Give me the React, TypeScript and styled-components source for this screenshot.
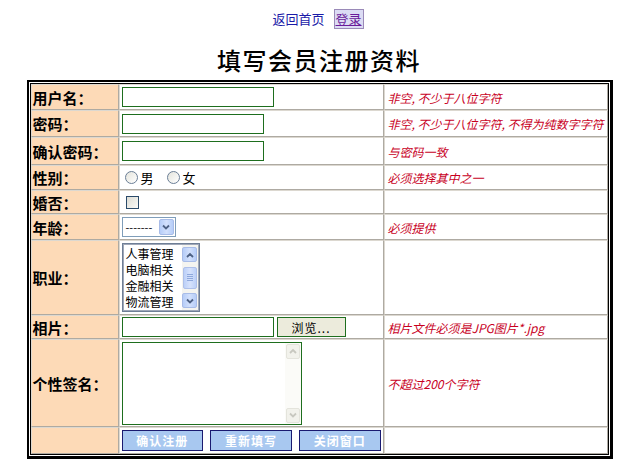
import styled, { createGlobalStyle } from 'styled-components'

const GlobalStyle = createGlobalStyle`
  html, body { margin: 0; padding: 0; background: #fff; }
  body { font-family: "Noto Sans CJK SC", "Liberation Sans", sans-serif; color: #000; }
`

const Page = styled.div`
  width: 638px;
  display: flex;
  flex-direction: column;
  align-items: center;
`

const TopLinks = styled.div`
  margin-top: 9px;
  height: 20px;
  display: flex;
  align-items: center;
  gap: 9px;
  font-size: 13px;
  line-height: 18px;
  margin-right: 4px;
`

const NavLink = styled.a<{ $active?: boolean }>`
  color: ${p => (p.$active ? '#6a1a9a' : '#1a1aa8')};
  text-decoration: ${p => (p.$active ? 'underline' : 'none')};
  background: ${p => (p.$active ? '#dcdcf4' : 'transparent')};
  outline: ${p => (p.$active ? '1px solid #9a8ab8' : 'none')};
  padding: 0 1px;
  cursor: pointer;
`

const Title = styled.h1`
  margin: 16px 0 0;
  height: 32px;
  font-size: 24px;
  line-height: 30px;
  font-weight: 500;
  letter-spacing: 1.5px;
`

const Frame = styled.div`
  margin-top: 3px;
  border: 2px solid #000;
  border-bottom-width: 3px;
  border-right-width: 3px;
  padding: 1px;
  background: #fff;
  margin-left: 1px;
`

const Table = styled.table`
  border: 1px solid #000;
  border-collapse: separate;
  border-spacing: 0;
  table-layout: fixed;
  width: 579px;
`

const Row = styled.tr<{ $h: number }>`
  height: ${p => p.$h}px;
`

const Cell = styled.td`
  border: 1px solid;
  border-color: #dcd8d0 #aeaaa2 #aeaaa2 #dcd8d0;
  padding: 0 2px;
  vertical-align: middle;
  font-size: 13px;
`

const LabelCell = styled(Cell)`
  width: 84px;
  background: #fddab7;
  font-size: 15px;
  font-weight: 700;
  padding: 0 0 0 1px;
  white-space: nowrap;
`

const HintCell = styled(Cell)`
  width: 218px;
  padding-left: 3px;
  color: #c8001e;
  font-size: 12px;
  font-style: italic;
  white-space: nowrap;
  overflow: hidden;
`

const TextInput = styled.input<{ $w: number }>`
  width: ${p => p.$w}px;
  height: 20px;
  box-sizing: border-box;
  border: 1px solid #1e6e1e;
  padding: 0 2px;
  display: block;
  outline: none;
`

const RadioGroup = styled.div`
  display: flex;
  align-items: center;
  padding-left: 3px;
  gap: 3px;
  font-size: 13px;
`

const Radio = styled.span`
  width: 11px;
  height: 11px;
  border-radius: 50%;
  border: 1px solid #6a7e96;
  background: linear-gradient(135deg, #e4e4dc, #fff);
  display: inline-block;
`

const RadioLabel = styled.span`
  margin-right: 10px;
`

const Check = styled.span`
  display: block;
  margin-left: 4px;
  width: 11px;
  height: 11px;
  border: 1px solid #2a4a6a;
  background: linear-gradient(135deg, #dcdcd4, #fafaf8);
`

const SelectBox = styled.div`
  width: 54px;
  height: 20px;
  box-sizing: border-box;
  border: 1px solid #7f9db9;
  display: flex;
  align-items: center;
  justify-content: space-between;
  font-size: 11px;
  padding-left: 3px;
  background: #fff;
`

const ArrowBtn = styled.span<{ $h?: number }>`
  width: 15px;
  height: ${p => p.$h ?? 16}px;
  margin: 1px;
  border-radius: 2px;
  background: linear-gradient(90deg, #b6cdf8, #d2e0fc, #b6cdf8);
  border: 1px solid #a8bce8;
  box-sizing: border-box;
  display: flex;
  align-items: center;
  justify-content: center;
`

const ListBox = styled.div`
  width: 78px;
  height: 69px;
  box-sizing: border-box;
  border: 2px solid #a0a8b8;
  outline: 1px solid #6e7e96;
  outline-offset: -1px;
  display: flex;
  background: #fff;
`

const ListItems = styled.div`
  flex: 1;
  padding: 1px 0 0 2px;
  font-size: 12px;
  line-height: 16px;
  overflow: hidden;
  white-space: nowrap;
`

const ScrollBar = styled.div<{ $pale?: boolean }>`
  width: 16px;
  display: flex;
  flex-direction: column;
  justify-content: space-between;
  align-items: center;
  padding: 1px 0;
  background: ${p => (p.$pale ? '#fbfbf8' : '#f4f4f0')};
`

const Thumb = styled.span`
  width: 14px;
  height: 22px;
  border-radius: 2px;
  background: linear-gradient(90deg, #bcd0f8, #d6e2fc, #bcd0f8);
  border: 1px solid #aec0ea;
  box-sizing: border-box;
  display: flex;
  flex-direction: column;
  align-items: center;
  justify-content: center;
  gap: 1px;
  & > i { display: block; width: 6px; height: 1px; background: #8ea8dc; }
`

const PaleArrow = styled.span`
  width: 14px;
  height: 15px;
  border-radius: 2px;
  border: 1px solid #e4e4dc;
  background: #f2f2ec;
  box-sizing: border-box;
  display: flex;
  align-items: center;
  justify-content: center;
`

const FileRow = styled.div`
  display: flex;
  gap: 3px;
  align-items: center;
`

const BrowseBtn = styled.button`
  width: 69px;
  height: 20px;
  border: 1px solid #1e6e1e;
  background: #ecebdc;
  font-family: inherit;
  font-size: 12px;
  letter-spacing: 1px;
  padding: 0;
  color: #000;
`

const TextArea = styled.div`
  width: 180px;
  height: 83px;
  box-sizing: border-box;
  border: 1px solid #1e6e1e;
  display: flex;
  justify-content: flex-end;
  background: #fff;
`

const BtnRow = styled.div`
  display: flex;
  gap: 7px;
`

const ActionBtn = styled.button`
  width: 82px;
  height: 21px;
  background: #a8c8f0;
  border: 1px solid #1a1a70;
  color: #fff;
  font-family: inherit;
  font-size: 12px;
  font-weight: 700;
  letter-spacing: 1px;
  padding: 0;
`

const Chevron = ({ up, color = '#4d6185' }: { up?: boolean; color?: string }) => (
  <svg width="8" height="6" viewBox="0 0 8 6">
    <path d={up ? 'M1 5 L4 2 L7 5' : 'M1 1.5 L4 4.5 L7 1.5'} fill="none" stroke={color} strokeWidth="1.8" />
  </svg>
)

const rows = [
  { label: '用户名：', h: 26, hint: '非空, 不少于八位字符', field: <TextInput $w={152} /> },
  { label: '密码：', h: 27, hint: '非空, 不少于八位字符, 不得为纯数字字符', field: <TextInput $w={142} type="password" /> },
  { label: '确认密码：', h: 28, hint: '与密码一致', field: <TextInput $w={142} type="password" /> }
]

export default function App () {
  return (
    <Page>
      <GlobalStyle />
      <TopLinks>
        <NavLink>返回首页</NavLink>
        <NavLink $active>登录</NavLink>
      </TopLinks>
      <Title>填写会员注册资料</Title>
      <Frame>
        <Table>
          <colgroup>
            <col style={{ width: 88 }} />
            <col style={{ width: 265 }} />
            <col style={{ width: 224 }} />
          </colgroup>
          <tbody>
            {rows.map(r => (
              <Row $h={r.h} key={r.label}>
                <LabelCell>{r.label}</LabelCell>
                <Cell>{r.field}</Cell>
                <HintCell>{r.hint}</HintCell>
              </Row>
            ))}
            <Row $h={25}>
              <LabelCell>性别：</LabelCell>
              <Cell>
                <RadioGroup>
                  <Radio /><RadioLabel>男</RadioLabel>
                  <Radio /><RadioLabel>女</RadioLabel>
                </RadioGroup>
              </Cell>
              <HintCell>必须选择其中之一</HintCell>
            </Row>
            <Row $h={24}>
              <LabelCell>婚否：</LabelCell>
              <Cell><Check /></Cell>
              <HintCell />
            </Row>
            <Row $h={26}>
              <LabelCell>年龄：</LabelCell>
              <Cell>
                <SelectBox>
                  <span>-------</span>
                  <ArrowBtn><Chevron /></ArrowBtn>
                </SelectBox>
              </Cell>
              <HintCell>必须提供</HintCell>
            </Row>
            <Row $h={75}>
              <LabelCell>职业：</LabelCell>
              <Cell>
                <ListBox>
                  <ListItems>
                    <div>人事管理</div>
                    <div>电脑相关</div>
                    <div>金融相关</div>
                    <div>物流管理</div>
                  </ListItems>
                  <ScrollBar>
                    <ArrowBtn $h={15}><Chevron up /></ArrowBtn>
                    <Thumb><i /><i /><i /><i /></Thumb>
                    <ArrowBtn $h={15}><Chevron /></ArrowBtn>
                  </ScrollBar>
                </ListBox>
              </Cell>
              <HintCell />
            </Row>
            <Row $h={24}>
              <LabelCell>相片：</LabelCell>
              <Cell>
                <FileRow>
                  <TextInput $w={152} />
                  <BrowseBtn>浏览...</BrowseBtn>
                </FileRow>
              </Cell>
              <HintCell>相片文件必须是JPG图片*.jpg</HintCell>
            </Row>
            <Row $h={88}>
              <LabelCell>个性签名：</LabelCell>
              <Cell>
                <TextArea>
                  <ScrollBar $pale>
                    <PaleArrow><Chevron up color="#c8c8c0" /></PaleArrow>
                    <PaleArrow><Chevron color="#c8c8c0" /></PaleArrow>
                  </ScrollBar>
                </TextArea>
              </Cell>
              <HintCell>不超过200个字符</HintCell>
            </Row>
            <Row $h={27}>
              <LabelCell />
              <Cell>
                <BtnRow>
                  <ActionBtn>确认注册</ActionBtn>
                  <ActionBtn>重新填写</ActionBtn>
                  <ActionBtn>关闭窗口</ActionBtn>
                </BtnRow>
              </Cell>
              <HintCell />
            </Row>
          </tbody>
        </Table>
      </Frame>
    </Page>
  )
}
